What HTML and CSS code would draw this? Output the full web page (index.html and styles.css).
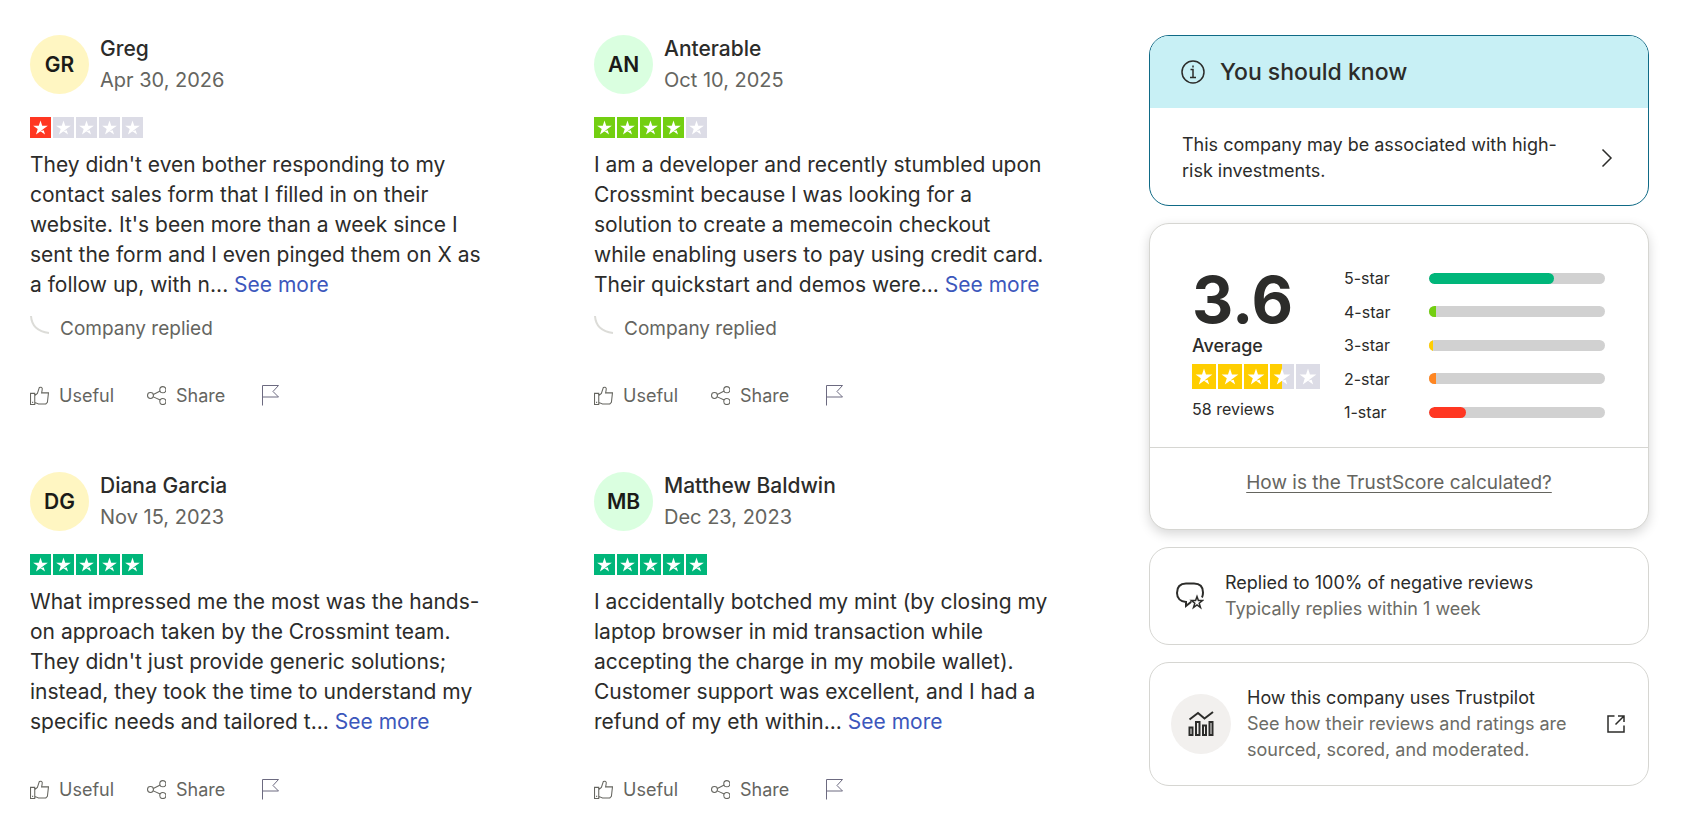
FILE: index.html
```html
<!DOCTYPE html>
<html lang="en">
<head>
    <meta charset="UTF-8">
    <meta name="viewport" content="width=device-width, initial-scale=1.0">
    <title>Crossmint Reviews</title>
    <link rel="stylesheet" href="styles.css">
</head>
<body>
    <!-- shared icons -->
    <svg class="sprite" aria-hidden="true">
        <symbol id="star" viewBox="0 0 96 96">
            <path d="M48 64.7 62.6 61l6.1 18.8zm33.6-24.3H55.9L48 16.2l-7.9 24.2H14.4l20.8 15-7.9 24.2 20.8-15 12.8-9.2z"/>
        </symbol>
        <symbol id="thumb" viewBox="0 0 18 18">
            <path d="M.5 7h4v10.500h-4zM4.500 9l2.500-2 1.800-5.500q2-1 2.700.500.300 1-.500 4.500h6.500l-1 9-1.500 1.500H8l-3.500-1.500M2 15.500h1"/>
        </symbol>
        <symbol id="share" viewBox="0 0 18 18">
            <circle cx="3.300" cy="9" r="2.800"/>
            <circle cx="15" cy="3.500" r="2.900"/>
            <circle cx="15" cy="14.700" r="2.900"/>
            <path d="M6 8l6.500-3.200M6 10.300l6.500 3"/>
        </symbol>
        <symbol id="flag" viewBox="0 0 20 24">
            <path d="M1.500 22.500v-20h16l-5.500 6 5.500 5.500h-16"/>
        </symbol>
    </svg>

    <div class="page">
        <main class="reviews">
            <article class="review">
                <header class="author">
                    <div class="avatar yellow">GR</div>
                    <div>
                        <h2>Greg</h2>
                        <time datetime="2026-04-30">Apr 30, 2026</time>
                    </div>
                </header>
                <div class="stars red" role="img" aria-label="Rated 1 out of 5">
                    <svg class="on"><use href="#star"/></svg>
                    <svg><use href="#star"/></svg>
                    <svg><use href="#star"/></svg>
                    <svg><use href="#star"/></svg>
                    <svg><use href="#star"/></svg>
                </div>
                <p class="text">They didn't even bother responding to my contact sales form that I filled in on their website. It's been more than a week since I sent the form and I even pinged them on X as a follow up, with n... <a href="#">See more</a></p>
                <p class="replied"><svg viewBox="0 0 20 18"><path d="M1 0q1 15 18 17"/></svg>Company replied</p>
                <footer class="actions">
                    <button type="button"><svg class="icon"><use href="#thumb"/></svg>Useful</button>
                    <button type="button"><svg class="icon"><use href="#share"/></svg>Share</button>
                    <button type="button" aria-label="Report"><svg class="flag"><use href="#flag"/></svg></button>
                </footer>
            </article>

            <article class="review">
                <header class="author">
                    <div class="avatar green">AN</div>
                    <div>
                        <h2>Anterable</h2>
                        <time datetime="2025-10-10">Oct 10, 2025</time>
                    </div>
                </header>
                <div class="stars lime" role="img" aria-label="Rated 4 out of 5">
                    <svg class="on"><use href="#star"/></svg>
                    <svg class="on"><use href="#star"/></svg>
                    <svg class="on"><use href="#star"/></svg>
                    <svg class="on"><use href="#star"/></svg>
                    <svg><use href="#star"/></svg>
                </div>
                <p class="text">I am a developer and recently stumbled upon Crossmint because I was looking for a solution to create a memecoin checkout<br>while enabling users to pay using credit card. Their quickstart and demos were... <a href="#">See more</a></p>
                <p class="replied"><svg viewBox="0 0 20 18"><path d="M1 0q1 15 18 17"/></svg>Company replied</p>
                <footer class="actions">
                    <button type="button"><svg class="icon"><use href="#thumb"/></svg>Useful</button>
                    <button type="button"><svg class="icon"><use href="#share"/></svg>Share</button>
                    <button type="button" aria-label="Report"><svg class="flag"><use href="#flag"/></svg></button>
                </footer>
            </article>

            <article class="review">
                <header class="author">
                    <div class="avatar yellow">DG</div>
                    <div>
                        <h2>Diana Garcia</h2>
                        <time datetime="2023-11-15">Nov 15, 2023</time>
                    </div>
                </header>
                <div class="stars emerald" role="img" aria-label="Rated 5 out of 5">
                    <svg class="on"><use href="#star"/></svg>
                    <svg class="on"><use href="#star"/></svg>
                    <svg class="on"><use href="#star"/></svg>
                    <svg class="on"><use href="#star"/></svg>
                    <svg class="on"><use href="#star"/></svg>
                </div>
                <p class="text">What impressed me the most was the hands-on approach taken by the Crossmint team. They didn't just provide generic solutions; instead, they took the time to understand my specific needs and tailored t... <a href="#">See more</a></p>
                <footer class="actions">
                    <button type="button"><svg class="icon"><use href="#thumb"/></svg>Useful</button>
                    <button type="button"><svg class="icon"><use href="#share"/></svg>Share</button>
                    <button type="button" aria-label="Report"><svg class="flag"><use href="#flag"/></svg></button>
                </footer>
            </article>

            <article class="review">
                <header class="author">
                    <div class="avatar green">MB</div>
                    <div>
                        <h2>Matthew Baldwin</h2>
                        <time datetime="2023-12-23">Dec 23, 2023</time>
                    </div>
                </header>
                <div class="stars emerald" role="img" aria-label="Rated 5 out of 5">
                    <svg class="on"><use href="#star"/></svg>
                    <svg class="on"><use href="#star"/></svg>
                    <svg class="on"><use href="#star"/></svg>
                    <svg class="on"><use href="#star"/></svg>
                    <svg class="on"><use href="#star"/></svg>
                </div>
                <p class="text">I accidentally botched my mint (by closing my laptop browser in mid transaction while accepting the charge in my mobile wallet). Customer support was excellent, and I had a refund of my eth within... <a href="#">See more</a></p>
                <footer class="actions">
                    <button type="button"><svg class="icon"><use href="#thumb"/></svg>Useful</button>
                    <button type="button"><svg class="icon"><use href="#share"/></svg>Share</button>
                    <button type="button" aria-label="Report"><svg class="flag"><use href="#flag"/></svg></button>
                </footer>
            </article>
        </main>

        <aside class="sidebar">
            <section class="card know">
                <h3>
                    <svg class="info" viewBox="0 0 24 24"><circle cx="12" cy="12" r="11"/><path d="M9.500 9.500H12v8M9 17.500h6M12 5.500v2"/></svg>
                    You should know
                </h3>
                <a class="know-link" href="#">
                    <span>This company may be associated with high-risk investments.</span>
                    <svg class="chevron" viewBox="0 0 12 20"><path d="M1.500 1.500l8.500 8.500-8.500 8.500"/></svg>
                </a>
            </section>

            <section class="card score">
                <div class="score-top">
                    <div class="summary">
                        <div class="value">3.6</div>
                        <div class="label">Average</div>
                        <div class="stars big amber" role="img" aria-label="3.6 out of 5">
                            <svg class="on"><use href="#star"/></svg>
                            <svg class="on"><use href="#star"/></svg>
                            <svg class="on"><use href="#star"/></svg>
                            <svg class="half"><use href="#star"/></svg>
                            <svg><use href="#star"/></svg>
                        </div>
                        <div class="count">58 reviews</div>
                    </div>
                    <ul class="bars">
                        <li>5-star <span class="bar"><i class="emerald" style="width: 71%"></i></span></li>
                        <li>4-star <span class="bar"><i class="lime" style="width: 4%"></i></span></li>
                        <li>3-star <span class="bar"><i class="amber" style="width: 2%"></i></span></li>
                        <li>2-star <span class="bar"><i class="orange" style="width: 4%"></i></span></li>
                        <li>1-star <span class="bar"><i class="red" style="width: 21%"></i></span></li>
                    </ul>
                </div>
                <div class="score-bottom">
                    <a href="#">How is the TrustScore calculated?</a>
                </div>
            </section>

            <section class="card replies">
                <svg class="bubble" viewBox="0 0 28 28">
                    <path d="M15.500 20H15l-5 4v-4C4.500 19.500 1 16 1 11 1 5 4 1.500 10 1.500h8c6 0 9 3.500 9 9 0 2-.300 3.500-1 5"/>
                    <path class="thin" d="M21 14.500l1.400 4.100h4.100l-3.300 2.600 1.300 4.300-3.500-2.600-3.500 2.600 1.300-4.300-3.300-2.600h4.100z"/>
                </svg>
                <div>
                    <p>Replied to 100% of negative reviews</p>
                    <p class="muted">Typically replies within 1 week</p>
                </div>
            </section>

            <a class="card uses" href="#">
                <span class="round">
                    <svg viewBox="0 0 26 26"><path d="M1.500 8.500L10 2l6.500 5.500L25 1"/><path d="M1.500 16.500h3v7.500h-3zM8 11h3.500v13H8zM15 14.500h3v9.500h-3zM21.500 11h3v13h-3z"/></svg>
                </span>
                <span class="uses-text">
                    How this company uses Trustpilot
                    <span class="muted">See how their reviews and ratings are sourced, scored, and moderated.</span>
                </span>
                <svg class="external" viewBox="0 0 18 18"><path d="M7.500 1H1v16h16v-6.500M8.500 9.500L17 1M11 1h6v6"/></svg>
            </a>
        </aside>
    </div>
</body>
</html>
```
FILE: styles.css
```css
* {
    box-sizing: border-box;
}
body {
    margin: 0;
    font-family: Inter, Arial, sans-serif;
    font-size: 21px;
    color: #2c2c2a;
    background-color: #fff;
}
h2, h3, p, ul {
    margin: 0;
    padding: 0;
}
svg {
    flex: none;
    fill: none;
    stroke: currentColor;
}
.sprite {
    display: none;
}
.page {
    display: grid;
    grid-template-columns: 1fr 500px;
    gap: 95px;
    padding: 35px 35px 20px 30px;
}

/* reviews */
.reviews {
    display: grid;
    grid-template-columns: 1fr 1fr;
    gap: 63px 104px;
    align-content: start;
}
.author {
    display: flex;
    gap: 11px;
    height: 60px;
}
.author h2 {
    font-size: 21px;
    font-weight: 500;
    line-height: 28px;
}
.author time {
    display: block;
    font-size: 20px;
    line-height: 35px;
    color: #65655f;
}
.avatar {
    display: flex;
    align-items: center;
    justify-content: center;
    width: 59px;
    height: 59px;
    border-radius: 50%;
    font-weight: 600;
    color: #1b1b18;
}
.avatar.yellow { background-color: #fff6c2; }
.avatar.green { background-color: #daffe0; }
.stars {
    display: flex;
    gap: 2px;
    width: 113px;
    height: 21px;
    margin-top: 22px;
}
.stars svg {
    flex: 1;
    min-width: 0;
    height: 100%;
    background-color: #dcdce6;
    fill: #fff;
    stroke: none;
}
.red { --tone: #ff3722; }
.orange { --tone: #ff8622; }
.amber { --tone: #ffce00; }
.lime { --tone: #73cf11; }
.emerald { --tone: #00b67a; }
.stars svg.on {
    background-color: var(--tone);
}
.stars svg.half {
    background-image: linear-gradient(to right, var(--tone) 50%, transparent 50%);
}
.text {
    margin-top: 12px;
    line-height: 30px;
}
.text a {
    color: #3c57bc;
    text-decoration: none;
}
.replied {
    display: flex;
    align-items: center;
    gap: 10px;
    margin-top: 15px;
    font-size: 19px;
    line-height: 28px;
    color: #65655f;
}
.replied svg {
    width: 20px;
    height: 18px;
    margin-bottom: 8px;
    stroke: #dcdcd8;
    stroke-width: 2;
}
.actions {
    display: flex;
    gap: 33px;
    margin-top: 38px;
}
.actions button {
    display: flex;
    align-items: center;
    gap: 10px;
    height: 28px;
    padding: 0;
    border: none;
    background: none;
    font-family: inherit;
    font-size: 18px;
    color: #65655f;
    cursor: pointer;
}
.actions .icon {
    width: 19px;
    height: 19px;
}
.actions .flag {
    width: 20px;
    height: 24px;
    margin-left: 3px;
    color: #6c6a80;
}

/* sidebar */
.sidebar {
    display: flex;
    flex-direction: column;
    gap: 17px;
    font-size: 18px;
    line-height: 26px;
}
.card {
    border: 1px solid #d6d6d2;
    border-radius: 20px;
    background-color: #fff;
}
.know {
    border-color: #0f6a86;
    overflow: hidden;
}
.know h3 {
    display: flex;
    align-items: center;
    gap: 15px;
    height: 72px;
    padding: 0 31px;
    background-color: #c8f0f5;
    font-size: 23px;
    font-weight: 500;
}
.info {
    width: 24px;
    height: 24px;
    stroke-width: 1.5;
}
.know-link {
    display: flex;
    align-items: center;
    justify-content: space-between;
    gap: 32px;
    padding: 24px 35px 21px 32px;
    color: inherit;
    text-decoration: none;
}
.chevron {
    width: 12px;
    height: 20px;
    stroke-width: 1.5;
}
.score {
    box-shadow: 0 4px 12px rgba(0, 0, 0, 0.16);
}
.score-top {
    display: flex;
    gap: 24px;
    padding: 42px 43px 23px 42px;
    border-bottom: 1px solid #d6d6d2;
}
.summary {
    width: 128px;
}
.value {
    font-size: 64px;
    font-weight: 700;
    line-height: 67px;
}
.label {
    font-weight: 500;
}
.stars.big {
    width: 128px;
    height: 25px;
    margin-top: 5px;
}
.count {
    margin-top: 7px;
    padding-bottom: 2px;
    font-size: 16px;
}
.bars {
    display: flex;
    flex: 1;
    flex-direction: column;
    justify-content: space-between;
    list-style: none;
    font-size: 16px;
    line-height: 24px;
}
.bars li {
    display: flex;
    align-items: center;
    justify-content: space-between;
}
.bar {
    width: 176px;
    height: 11px;
    border-radius: 6px;
    overflow: hidden;
    background-color: #d1d1d1;
}
.bar i {
    display: block;
    height: 100%;
    background-color: var(--tone);
}
.bar i.emerald,
.bar i.red {
    border-radius: 6px;
}
.score-bottom {
    padding: 22px 20px 33px;
    text-align: center;
}
.score-bottom a {
    font-size: 19px;
    color: #65655f;
    text-underline-offset: 3px;
}
.replies {
    display: flex;
    align-items: center;
    gap: 21px;
    padding: 22px 26px;
}
.bubble {
    width: 28px;
    height: 28px;
    stroke-width: 2;
}
.bubble .thin {
    stroke-width: 1.5;
}
.muted {
    color: #6c6c66;
}
.uses {
    display: flex;
    align-items: center;
    gap: 16px;
    padding: 22px 23px 22px 21px;
    color: inherit;
    text-decoration: none;
}
.round {
    display: flex;
    align-items: center;
    justify-content: center;
    flex: none;
    width: 60px;
    height: 60px;
    border-radius: 50%;
    background-color: #f2f0ee;
}
.round svg {
    width: 26px;
    height: 26px;
    stroke-width: 2;
}
.uses-text {
    flex: 1;
}
.uses-text .muted {
    display: block;
}
.external {
    width: 18px;
    height: 18px;
    stroke-width: 1.5;
}
```
